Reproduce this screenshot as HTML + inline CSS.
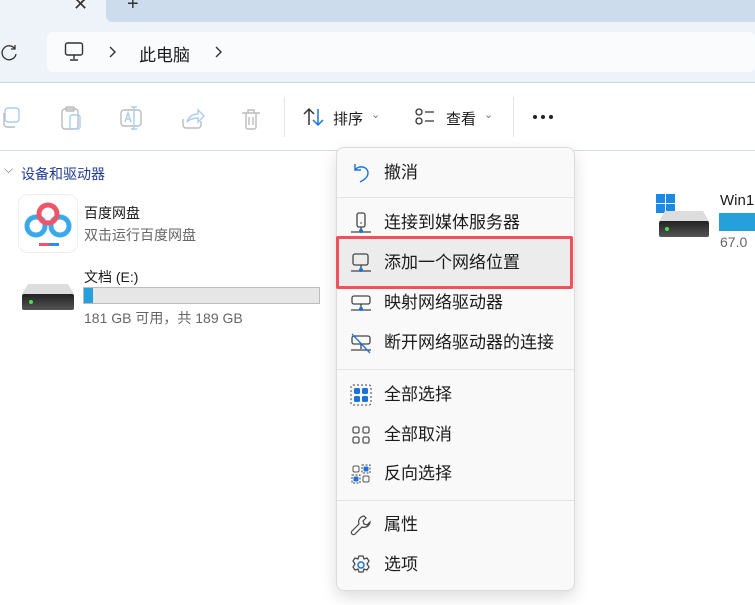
<!DOCTYPE html>
<html><head><meta charset="utf-8"><style>
*{margin:0;padding:0;box-sizing:border-box}
body{width:755px;height:605px;overflow:hidden;background:#fff;font-family:"Liberation Sans","Noto Sans CJK SC",sans-serif;position:relative;color:#1a1a1a}
.a{position:absolute}
.mi{position:absolute;left:384px;font-size:17px;color:#1b1b1b;line-height:20px}
.ic{position:absolute;left:350px}
.sep{position:absolute;left:337px;width:237px;height:1px;background:#e3e3e3}
</style></head><body>
<div class="a" style="left:0;top:0;width:755px;height:82px;background:#eef3f9"></div>
<div class="a" style="left:106px;top:0;width:649px;height:22px;background:#cddcec;border-bottom-left-radius:6px"></div>
<div class="a" style="left:73px;top:-6px;font-size:18px;color:#333">✕</div>
<div class="a" style="left:127px;top:-7px;font-size:20px;color:#333">+</div>
<svg class="a" style="left:0;top:43px" width="20" height="20" viewBox="0 0 20 20"><path d="M15 6 A7 7 0 1 0 16 11" fill="none" stroke="#333" stroke-width="1.3"/><path d="M15 2v4h-4" fill="none" stroke="#333" stroke-width="1.3"/></svg>
<div class="a" style="left:47px;top:32px;width:708px;height:40px;background:#fafbfd;border-radius:6px"></div>
<svg class="a" style="left:64px;top:41px" width="20" height="22" viewBox="0 0 20 22"><rect x="1.5" y="2" width="17" height="12" rx="2" fill="none" stroke="#333" stroke-width="1.4"/><path d="M10 14v4M6 19h8" stroke="#333" stroke-width="1.4"/></svg>
<svg class="a" style="left:108px;top:45px" width="10" height="14" viewBox="0 0 10 14"><path d="M2 2l5 5-5 5" fill="none" stroke="#333" stroke-width="1.4"/></svg>
<div class="a" style="left:139px;top:41px;font-size:17px;color:#1a1a1a">此电脑</div>
<svg class="a" style="left:214px;top:45px" width="10" height="14" viewBox="0 0 10 14"><path d="M2 2l5 5-5 5" fill="none" stroke="#333" stroke-width="1.4"/></svg>
<div class="a" style="left:0;top:82px;width:755px;height:1px;background:#c9d6e3"></div>
<div class="a" style="left:0;top:150px;width:755px;height:1px;background:#d5dde6"></div>
<svg class="a" style="left:0;top:105px" width="280" height="26" viewBox="0 0 280 26" fill="none" stroke-width="1.4">
<rect x="5" y="3" width="14" height="14" rx="3" stroke="#a9cdf1"/><path d="M4 8v11a3 3 0 0 0 3 3h8" stroke="#bbb"/>
<rect x="62" y="4" width="16" height="20" rx="3" stroke="#bbb"/><rect x="70" y="10" width="10" height="14" rx="2" stroke="#a9cdf1"/><rect x="66" y="2" width="8" height="4" rx="1" stroke="#bbb"/>
<rect x="121" y="5" width="20" height="16" rx="3" stroke="#bbb"/><path d="M125 17l3-9 3 9M126 14h4M134 2v22M131 2h6M131 24h6" stroke="#a9cdf1"/>
<path d="M183 14v6a3 3 0 0 0 3 3h12a3 3 0 0 0 3-3v-4" stroke="#bbb"/><path d="M187 17c2-6 6-8 11-8V5l6 6-6 6v-4c-4 0-8 1-11 4" stroke="#a9cdf1"/>
<path d="M242 8h18M246 8v14a2 2 0 0 0 2 2h6a2 2 0 0 0 2-2V8M248 8V5h6v3M249 12v8M253 12v8" stroke="#bbb"/>
</svg>
<div class="a" style="left:284px;top:97px;width:1px;height:40px;background:#e5e5e5"></div>
<div class="a" style="left:513px;top:97px;width:1px;height:40px;background:#e5e5e5"></div>
<svg class="a" style="left:303px;top:107px" width="22" height="20" viewBox="0 0 22 20" fill="none" stroke-width="1.5"><path d="M6 18V2M1 7l5-5 5 5" stroke="#333"/><path d="M15 2v16M10 13l5 5 5-5" stroke="#1a73d9"/></svg>
<div class="a" style="left:333px;top:108px;font-size:15px">排序</div>
<div class="a" style="left:371px;top:108px;font-size:11px;color:#777">⌄</div>
<svg class="a" style="left:414px;top:107px" width="24" height="20" viewBox="0 0 24 20" fill="none" stroke="#333" stroke-width="1.3"><circle cx="5" cy="5" r="3"/><circle cx="5" cy="14" r="3"/><path d="M11 5h9M11 14h9"/></svg>
<div class="a" style="left:446px;top:108px;font-size:15px">查看</div>
<div class="a" style="left:484px;top:108px;font-size:11px;color:#777">⌄</div>
<svg class="a" style="left:532px;top:113px" width="24" height="8" viewBox="0 0 24 8"><circle cx="3" cy="4" r="2" fill="#222"/><circle cx="11" cy="4" r="2" fill="#222"/><circle cx="19" cy="4" r="2" fill="#222"/></svg>
<div class="a" style="left:4px;top:162px;font-size:12px;color:#666">⌵</div>
<div class="a" style="left:21px;top:164px;font-size:14px;color:#1f3a93">设备和驱动器</div>
<div class="a" style="left:18px;top:194px;width:60px;height:59px;border:1px solid #eee;border-radius:10px;background:#fff"></div>
<svg class="a" style="left:22px;top:200px" width="52" height="48" viewBox="0 0 52 48"><circle cx="14" cy="26" r="9" fill="none" stroke="#3aa9ec" stroke-width="5"/><circle cx="38" cy="26" r="9" fill="none" stroke="#3aa9ec" stroke-width="5"/><circle cx="26" cy="14" r="9" fill="none" stroke="#ef5468" stroke-width="5"/><rect x="17" y="43" width="10" height="3" fill="#ef5468"/><rect x="27" y="43" width="10" height="3" fill="#2e8be8"/></svg>
<div class="a" style="left:84px;top:203px;font-size:14px">百度网盘</div>
<div class="a" style="left:84px;top:225px;font-size:14px;color:#666">双击运行百度网盘</div>
<svg class="a" style="left:20px;top:282px" width="56" height="30" viewBox="0 0 56 30"><defs><linearGradient id="g" x1="0" y1="0" x2="0" y2="1"><stop offset="0" stop-color="#222"/><stop offset="1" stop-color="#555"/></linearGradient></defs><path d="M8 2h40l6 10H2z" fill="#ddd"/><rect x="2" y="12" width="52" height="16" rx="2" fill="url(#g)"/><circle cx="11" cy="20" r="2" fill="#4ce04c"/></svg>
<div class="a" style="left:84px;top:267px;font-size:14px">文档 (E:)</div>
<div class="a" style="left:83px;top:287px;width:237px;height:17px;background:#e6e6e6;border:1px solid #bcbcbc"></div>
<div class="a" style="left:84px;top:288px;width:9px;height:15px;background:#26a0da"></div>
<div class="a" style="left:84px;top:308px;font-size:14px;color:#666">181 GB 可用，共 189 GB</div>
<svg class="a" style="left:655px;top:193px" width="58" height="46" viewBox="0 0 58 46"><rect x="1" y="1" width="9" height="9" fill="#1a8ae6"/><rect x="11" y="1" width="9" height="9" fill="#1a8ae6"/><rect x="1" y="11" width="9" height="9" fill="#1a8ae6"/><rect x="11" y="11" width="9" height="9" fill="#1a8ae6"/><path d="M10 18h38l6 10H4z" fill="#ddd"/><rect x="4" y="28" width="50" height="16" rx="2" fill="url(#g)"/><circle cx="12" cy="36" r="2" fill="#4ce04c"/></svg>
<div class="a" style="left:720px;top:192px;font-size:15px">Win1</div>
<div class="a" style="left:719px;top:213px;width:36px;height:18px;background:#26a0da"></div>
<div class="a" style="left:720px;top:234px;font-size:14px;color:#666">67.0</div>
<div class="a" style="left:336px;top:147px;width:239px;height:444px;background:#f9f9f9;border:1px solid #dcdcdc;border-radius:8px;box-shadow:0 6px 16px rgba(0,0,0,.14)"></div>
<svg class="ic" style="top:161px" width="22" height="22" viewBox="0 0 22 22" fill="none" stroke="#1a73d9" stroke-width="1.4"><path d="M5 3v6h6"/><path d="M5 9c3-5 13-4 13 3 0 4-4 7-8 9"/></svg>
<div class="mi" style="top:163px">撤消</div>
<div class="sep" style="top:197px"></div>
<svg class="ic" style="top:211px" width="22" height="24" viewBox="0 0 22 24" fill="none" stroke-width="1.3"><rect x="7" y="2" width="8" height="14" rx="2" stroke="#444"/><circle cx="11" cy="12" r=".8" fill="#444"/><path d="M11 16v4M1 21h20" stroke="#444"/><circle cx="11" cy="20" r="2" fill="#1a73d9" stroke="none"/></svg>
<div class="mi" style="top:213px">连接到媒体服务器</div>
<div class="a" style="left:338px;top:238px;width:233px;height:48px;background:#ececec;border-radius:4px"></div>
<div class="a" style="left:336px;top:236px;width:237px;height:53px;border:3px solid #f2505a;border-radius:2px"></div>
<svg class="ic" style="top:251px" width="22" height="24" viewBox="0 0 22 24" fill="none" stroke-width="1.3"><rect x="3" y="3" width="15" height="11" rx="2" stroke="#444"/><path d="M11 14v5M1 20h20" stroke="#444"/><circle cx="11" cy="19" r="2" fill="#1a73d9" stroke="none"/></svg>
<div class="mi" style="top:253px">添加一个网络位置</div>
<svg class="ic" style="top:291px" width="22" height="24" viewBox="0 0 22 24" fill="none" stroke-width="1.3"><rect x="2" y="5" width="18" height="8" rx="2" stroke="#444"/><path d="M11 13v5M1 19h20" stroke="#444"/><circle cx="11" cy="18" r="2" fill="#1a73d9" stroke="none"/></svg>
<div class="mi" style="top:293px">映射网络驱动器</div>
<svg class="ic" style="top:331px" width="22" height="24" viewBox="0 0 22 24" fill="none" stroke-width="1.3"><rect x="2" y="5" width="18" height="8" rx="2" stroke="#444"/><path d="M11 13v5M1 19h20" stroke="#444"/><path d="M2 3l18 19" stroke="#1a73d9"/></svg>
<div class="mi" style="top:333px">断开网络驱动器的连接</div>
<div class="sep" style="top:369px"></div>
<svg class="ic" style="top:384px" width="22" height="22" viewBox="0 0 22 22"><rect x="1" y="1" width="20" height="20" rx="2" fill="none" stroke="#444" stroke-dasharray="2 2"/><rect x="4" y="4" width="6" height="6" rx="1.5" fill="#1a73d9"/><rect x="12" y="4" width="6" height="6" rx="1.5" fill="#1a73d9"/><rect x="4" y="12" width="6" height="6" rx="1.5" fill="#1a73d9"/><rect x="12" y="12" width="6" height="6" rx="1.5" fill="#1a73d9"/></svg>
<div class="mi" style="top:385px">全部选择</div>
<svg class="ic" style="top:424px" width="22" height="22" viewBox="0 0 22 22" fill="none" stroke="#555" stroke-width="1.3"><rect x="3" y="3" width="6" height="6" rx="1.5"/><rect x="13" y="3" width="6" height="6" rx="1.5"/><rect x="3" y="13" width="6" height="6" rx="1.5"/><rect x="13" y="13" width="6" height="6" rx="1.5"/></svg>
<div class="mi" style="top:425px">全部取消</div>
<svg class="ic" style="top:463px" width="22" height="22" viewBox="0 0 22 22"><rect x="3" y="3" width="6" height="6" rx="1.5" fill="none" stroke="#555"/><rect x="12" y="2" width="8" height="8" fill="none" stroke="#444" stroke-dasharray="2 1.5"/><rect x="13.5" y="3.5" width="5" height="5" rx="1.5" fill="#1a73d9"/><rect x="2" y="12" width="8" height="8" fill="none" stroke="#444" stroke-dasharray="2 1.5"/><rect x="3.5" y="13.5" width="5" height="5" rx="1.5" fill="#1a73d9"/><rect x="13" y="13" width="6" height="6" rx="1.5" fill="none" stroke="#555"/></svg>
<div class="mi" style="top:464px">反向选择</div>
<div class="sep" style="top:500px"></div>
<svg class="ic" style="top:514px" width="22" height="22" viewBox="0 0 22 22" fill="none" stroke="#444" stroke-width="1.2"><path d="M14 2a6 6 0 0 0-5 8L2 17a2 2 0 0 0 3 3l7-7a6 6 0 0 0 8-5l-3 3-3-1-1-3 3-3z"/></svg>
<div class="mi" style="top:515px">属性</div>
<svg class="ic" style="top:554px" width="22" height="22" viewBox="0 0 22 22" fill="none" stroke-width="1.2"><path d="M9 2h4l1 3 3-1 2 3-2 3 2 3-2 3-3-1-1 3H9l-1-3-3 1-2-3 2-3-2-3 2-3 3 1z" stroke="#444"/><circle cx="11" cy="11" r="3" stroke="#1a73d9" stroke-width="1.5"/></svg>
<div class="mi" style="top:555px">选项</div>
</body></html>
